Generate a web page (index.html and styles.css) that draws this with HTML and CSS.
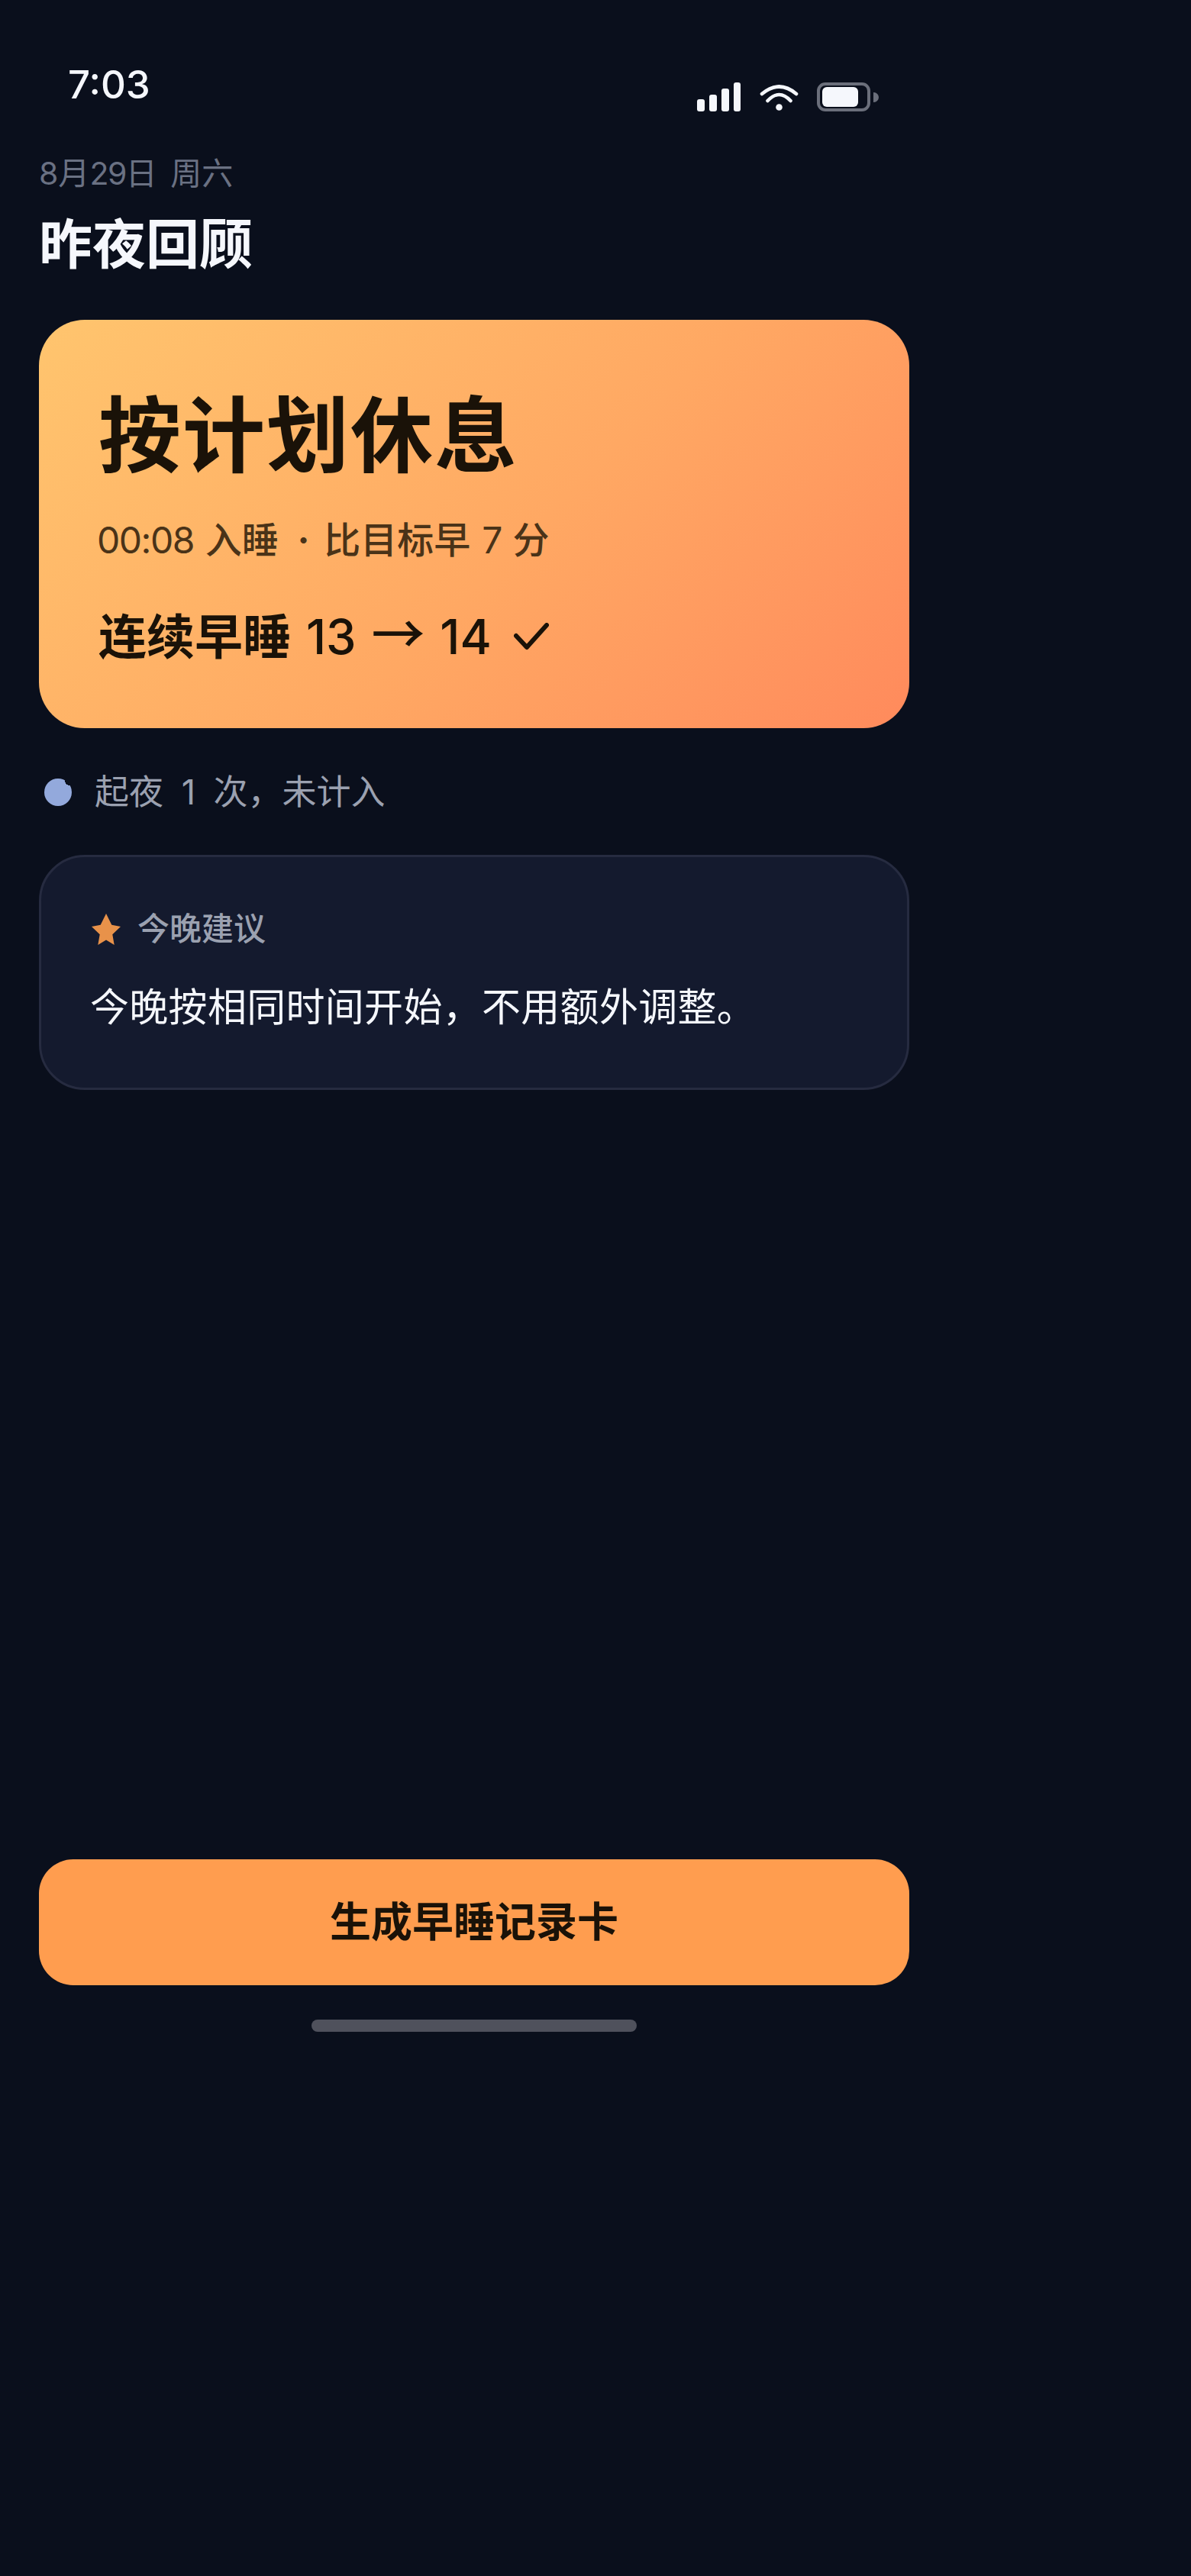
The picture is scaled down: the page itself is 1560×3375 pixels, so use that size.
FILE: index.html
```html
<!DOCTYPE html>
<html lang="zh">
<head>
    <meta charset="utf-8">
    <title>昨夜回顾</title>
    <link rel="stylesheet" href="styles.css">
</head>
<body>
    <div class="screen">
        <div class="status-bar">
            <span class="clock">7:03</span>
            <div class="status-icons">
                <svg class="signal" width="58" height="38" viewBox="0 0 58 38">
                    <rect x="0" y="22" width="10" height="16" rx="3"/>
                    <rect x="16" y="16" width="10" height="22" rx="3"/>
                    <rect x="32" y="8" width="10" height="30" rx="3"/>
                    <rect x="48" y="0" width="9" height="38" rx="3"/>
                </svg>
                <svg class="wifi" width="51" height="34" viewBox="0 0 51 34">
                    <path d="M3 12Q25.5 -7 48 12" fill="none" stroke="#f5f7fc" stroke-width="4.6" stroke-linecap="round"/>
                    <path d="M10.5 21Q25.5 5 40.5 21" fill="none" stroke="#f5f7fc" stroke-width="4.6" stroke-linecap="round"/>
                    <circle cx="25.5" cy="29.5" r="4.3" fill="#f5f7fc"/>
                </svg>
                <div class="battery">
                    <div class="battery-body"><div class="battery-level"></div></div>
                    <div class="battery-tip"></div>
                </div>
            </div>
        </div>

        <div class="date">8月<span class="num">29</span>日 周六</div>
        <h1 class="page-title">昨夜回顾</h1>

        <div class="hero-card">
            <div class="hero-title">按计划休息</div>
            <div class="hero-sub"><span class="num">00:08</span> 入睡 <span class="sep">·</span> 比目标早 <span class="num">7</span> 分</div>
            <div class="hero-streak">
                <span>连续早睡 <span class="streak-num">13</span> <span class="arrow">→</span> <span class="streak-num">14</span></span>
                <svg class="check" width="46" height="36" viewBox="0 0 46 36">
                    <path d="M3 17L17 32L43 3" fill="none" stroke="#1a1208" stroke-width="6" stroke-linecap="round" stroke-linejoin="round"/>
                </svg>
            </div>
        </div>

        <div class="wake-row">
            <span class="wake-dot"></span>
            <span class="wake-text">起夜 1 次，未计入</span>
        </div>

        <div class="tip-card">
            <div class="tip-head">
                <svg class="star" width="38" height="41" viewBox="0 0 38 41">
                    <path d="M19 0L26.3 14.7L38 17L27.3 27.3L29.7 41L19 34.5L8.3 41L10.7 27.3L0 17L11.7 14.7Z" fill="#e8924a"/>
                </svg>
                <span>今晚建议</span>
            </div>
            <div class="tip-text">今晚按相同时间开始，不用额外调整。</div>
        </div>

        <button class="action-btn" type="button">生成早睡记录卡</button>
        <div class="home-bar"></div>
    </div>
</body>
</html>
```

FILE: styles.css
```css
html, body {
    margin: 0;
    height: 100%;
    background-color: #0a0f1c;
}
body {
    font-family: Inter, "Noto Sans CJK SC", sans-serif;
    color: #f5f7fc;
}
.num {
    letter-spacing: -1.5px;
    font-weight: 400;
}
.screen {
    width: 1242px;
    height: 2700px;
    padding: 0 51px;
    box-sizing: border-box;
    display: flex;
    flex-direction: column;
}
.status-bar {
    height: 150px;
    display: flex;
    justify-content: space-between;
    flex-shrink: 0;
}
.clock {
    margin: 80px 0 0 38px;
    font-size: 51px;
    line-height: 62px;
    font-weight: 500;
}
.status-icons {
    display: flex;
    align-items: flex-start;
    gap: 24px;
    padding-top: 108px;
    margin-right: 40px;
}
.signal rect {
    fill: #f5f7fc;
}
.wifi {
    margin-top: 3px;
}
.battery {
    display: flex;
    align-items: center;
    gap: 4px;
    height: 38px;
}
.battery-body {
    width: 70px;
    height: 38px;
    box-sizing: border-box;
    border: 4px solid #6b6f7b;
    border-radius: 11px;
    padding: 2px 3px;
}
.battery-level {
    width: 47px;
    height: 26px;
    background-color: #f5f7fc;
    border-radius: 6px;
}
.battery-tip {
    width: 7px;
    height: 13px;
    background-color: #6b6f7b;
    border-radius: 0 7px 7px 0;
}
.date {
    margin-top: 50px;
    font-size: 41px;
    line-height: 54px;
    color: #6a7183;
    word-spacing: 6px;
}
.page-title {
    margin: 22px 0 0;
    font-size: 70px;
    line-height: 90px;
    font-weight: 700;
}
.hero-card {
    margin-top: 53px;
    height: 535px;
    flex-shrink: 0;
    box-sizing: border-box;
    padding: 87px 78px 0;
    border-radius: 60px;
    background: linear-gradient(135deg, #ffc56e 0%, #ffa863 55%, #ff8a5c 100%);
    color: #1a1208;
}
.hero-title {
    font-size: 108px;
    line-height: 130px;
    font-weight: 700;
    letter-spacing: 2px;
}
.hero-sub {
    margin: 41px 0 0 -2px;
    font-size: 48px;
    line-height: 62px;
    font-weight: 500;
    color: #4a3318;
    word-spacing: 2px;
}
.sep {
    margin: 0 4px 0 10px;
    font-weight: 700;
}
.hero-streak {
    margin-top: 50px;
    display: flex;
    align-items: center;
    gap: 29px;
    font-size: 63px;
    line-height: 76px;
    font-weight: 600;
    word-spacing: 4px;
}
.streak-num {
    font-weight: 550;
}
.arrow {
    font-family: "Noto Sans CJK SC", sans-serif;
    font-size: 70px;
    font-weight: 500;
}
.check {
    margin-top: 6px;
}
.wake-row {
    margin-top: 53px;
    display: flex;
    align-items: center;
    gap: 30px;
    padding-left: 7px;
}
.wake-dot {
    width: 36px;
    height: 36px;
    border-radius: 50%;
    /* small bite out of the upper right edge */
    background: radial-gradient(circle 6px at 33px 3px, #0a0f1c 96%, #93a9dc 100%);
}
.wake-text {
    font-size: 45px;
    line-height: 62px;
    color: #9ba1b0;
    word-spacing: 11px;
}
.tip-card {
    margin-top: 51px;
    height: 308px;
    flex-shrink: 0;
    box-sizing: border-box;
    padding: 66px 66px 0 64px;
    border: 3px solid #262b40;
    border-radius: 60px;
    background-color: #141a2e;
}
.tip-head {
    display: flex;
    align-items: center;
    gap: 22px;
    padding-left: 2px;
    font-size: 42px;
    line-height: 56px;
    font-weight: 500;
    color: #9ba1b0;
}
.tip-text {
    margin-top: 41px;
    font-size: 51px;
    line-height: 68px;
    letter-spacing: 0.3px;
}
.action-btn {
    margin-top: auto;
    height: 165px;
    flex-shrink: 0;
    padding-bottom: 10px;
    border: none;
    border-radius: 45px;
    background-color: #ff9d4f;
    color: #1a1208;
    font-family: inherit;
    font-size: 54px;
    font-weight: 700;
}
.home-bar {
    align-self: center;
    width: 426px;
    height: 16px;
    margin: 45px 0 38px;
    flex-shrink: 0;
    border-radius: 8px;
    background-color: #4f515c;
}
```
